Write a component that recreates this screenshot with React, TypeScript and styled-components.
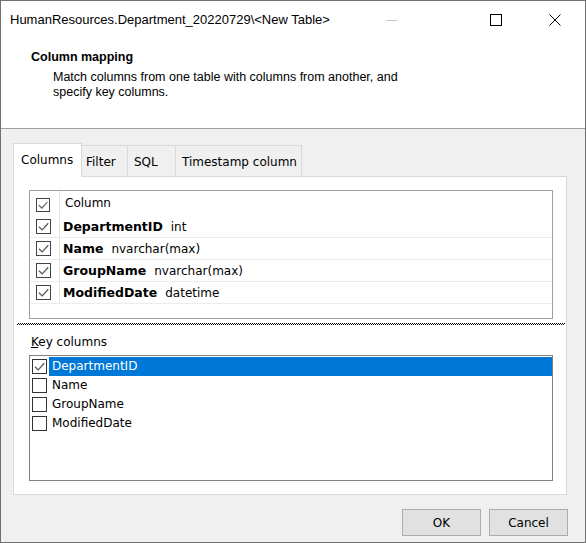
import React from "react";
import styled, { createGlobalStyle } from "styled-components";

const GlobalStyle = createGlobalStyle`
  html, body {
    margin: 0;
    padding: 0;
    background: #ffffff;
  }
  body {
    font-family: "DejaVu Sans", sans-serif;
    font-size: 12px;
    color: #000;
  }
  * {
    box-sizing: border-box;
  }
`;

const Window = styled.div`
  width: 586px;
  height: 543px;
  border: 1px solid #707070;
  background: #ffffff;
  display: flex;
  flex-direction: column;
  overflow: hidden;
`;

const TitleBar = styled.div`
  height: 38px;
  display: flex;
  align-items: center;
  background: #ffffff;
`;

const TitleText = styled.div`
  flex: 1;
  padding-left: 9px;
  font-family: "Liberation Sans", Arial, sans-serif;
  font-size: 13px;
  line-height: 38px;
  white-space: nowrap;
`;

const ControlButton = styled.div<{ $w: number; $mr?: number }>`
  width: ${(p) => p.$w}px;
  margin-right: ${(p) => p.$mr || 0}px;
  height: 38px;
  display: flex;
  align-items: center;
  justify-content: center;
`;

const Header = styled.div`
  height: 90px;
  padding: 10px 0 0 30px;
  border-bottom: 1px solid #a0a0a0;
  background: #ffffff;
  font-family: "Liberation Sans", Arial, sans-serif;
  font-size: 12.5px;
`;

const HeaderTitle = styled.div`
  font-weight: bold;
  line-height: 16px;
`;

const HeaderText = styled.div`
  margin: 5px 0 0 22px;
  line-height: 15px;
  width: 360px;
`;

const Body = styled.div`
  flex: 1;
  background: #f0f0f0;
  padding: 14px 18px 0 12px;
  display: flex;
  flex-direction: column;
`;

const TabStrip = styled.div`
  height: 33px;
  display: flex;
  align-items: flex-end;
`;

const Tab = styled.div<{ $active?: boolean; $w: number; $pl: number }>`
  position: relative;
  z-index: ${(p) => (p.$active ? 1 : 0)};
  width: ${(p) => p.$w}px;
  height: ${(p) => (p.$active ? 34 : 31)}px;
  margin-bottom: ${(p) => (p.$active ? -1 : 0)}px;
  padding: 9px 0 0 ${(p) => p.$pl}px;
  background: ${(p) => (p.$active ? "#ffffff" : "#f0f0f0")};
  border-top: 1px solid #d9d9d9;
  border-right: 1px solid #d9d9d9;
  border-left: ${(p) => (p.$active ? "1px solid #d9d9d9" : "none")};
  line-height: 14px;
  white-space: nowrap;
`;

const Panel = styled.div`
  width: 554px;
  border: 1px solid #d9d9d9;
  background: #ffffff;
  padding: 13px 13px 13px 15px;
`;

const Grid = styled.div`
  height: 129px;
  border: 1px solid #a0a0a0;
  background: #ffffff;
`;

const GridRow = styled.div<{ $header?: boolean }>`
  display: flex;
  height: ${(p) => (p.$header ? 25 : 22)}px;
  border-bottom: ${(p) => (p.$header ? "none" : "1px solid #ececec")};
`;

const CheckCell = styled.div<{ $header?: boolean }>`
  width: 30px;
  border-right: 1px solid #e3e3e3;
  display: flex;
  align-items: ${(p) => (p.$header ? "flex-start" : "center")};
  padding: ${(p) => (p.$header ? "7px 0 0 6px" : "0 0 0 6px")};
`;

const NameCell = styled.div<{ $header?: boolean }>`
  flex: 1;
  display: flex;
  align-items: ${(p) => (p.$header ? "flex-start" : "center")};
  padding: ${(p) => (p.$header ? "5px 0 0 5px" : "0 0 0 3px")};
  white-space: nowrap;
  line-height: 14px;
`;

const ColName = styled.span`
  font-weight: bold;
  font-size: 12.5px;
  margin-right: 8px;
`;

const Box = styled.span<{ $size: number; $dark?: boolean }>`
  width: ${(p) => p.$size}px;
  height: ${(p) => p.$size}px;
  border: 1px solid ${(p) => (p.$dark ? "#333333" : "#444444")};
  background: #ffffff;
  display: inline-flex;
  align-items: center;
  justify-content: center;
  flex-shrink: 0;
`;

const Splitter = styled.div`
  height: 2px;
  margin: 4px -12px 0 -12px;
  background: repeating-conic-gradient(#000000 0 25%, transparent 0 50%) 0 0 / 2px 2px;
`;

const KeyLabel = styled.div`
  margin: 10px 0 0 2px;
  line-height: 14px;
`;

const KeyList = styled.div`
  margin-top: 6px;
  height: 126px;
  border: 1px solid #828282;
  padding-top: 1px;
  background: #ffffff;
`;

const KeyItem = styled.div`
  height: 19px;
  display: flex;
  align-items: center;
  padding-left: 2px;
`;

const KeyText = styled.span<{ $selected?: boolean }>`
  flex: 1;
  height: 19px;
  line-height: 19px;
  margin-left: 2px;
  padding-left: 3px;
  background: ${(p) => (p.$selected ? "#0078d7" : "transparent")};
  color: ${(p) => (p.$selected ? "#ffffff" : "#000000")};
`;

const Footer = styled.div`
  display: flex;
  justify-content: flex-end;
  gap: 8px;
  padding-top: 14px;
  margin-right: -1px;
`;

const Button = styled.button`
  width: 79px;
  height: 27px;
  background: #e1e1e1;
  border: 1px solid #adadad;
  font-family: "DejaVu Sans", sans-serif;
  font-size: 12px;
  color: #000;
  padding: 0;
`;

function Check({ size, color }: { size: number; color: string }) {
  return (
    <svg width={size - 2} height={size - 2} viewBox="0 0 12 12">
      <path d="M1.8 6.2 L4.8 9.2 L10.4 3" fill="none" stroke={color} strokeWidth="1.1" />
    </svg>
  );
}

function CheckBox({ checked, size, dark }: { checked: boolean; size: number; dark?: boolean }) {
  return (
    <Box $size={size} $dark={dark}>
      {checked && <Check size={size} color="#555555" />}
    </Box>
  );
}

const columns = [
  { name: "DepartmentID", type: "int" },
  { name: "Name", type: "nvarchar(max)" },
  { name: "GroupName", type: "nvarchar(max)" },
  { name: "ModifiedDate", type: "datetime" },
];

export default function App() {
  return (
    <>
      <GlobalStyle />
      <Window>
        <TitleBar>
          <TitleText>HumanResources.Department_20220729\&lt;New Table&gt;</TitleText>
          <ControlButton $w={46} $mr={52}>
            <svg width="11" height="1" viewBox="0 0 11 1">
              <rect x="0" y="0" width="11" height="1" fill="#c6c6c6" />
            </svg>
          </ControlButton>
          <ControlButton $w={59}>
            <svg width="12" height="12" viewBox="0 0 12 12">
              <rect x="0.5" y="0.5" width="11" height="11" fill="none" stroke="#000" strokeWidth="1" />
            </svg>
          </ControlButton>
          <ControlButton $w={60}>
            <svg width="12" height="12" viewBox="0 0 12 12">
              <path d="M0.5 0.5 L11.5 11.5 M11.5 0.5 L0.5 11.5" stroke="#000" strokeWidth="1" />
            </svg>
          </ControlButton>
        </TitleBar>

        <Header>
          <HeaderTitle>Column mapping</HeaderTitle>
          <HeaderText>
            Match columns from one table with columns from another, and specify key columns.
          </HeaderText>
        </Header>

        <Body>
          <TabStrip>
            <Tab $active $w={69} $pl={7}>Columns</Tab>
            <Tab $w={46} $pl={4}>Filter</Tab>
            <Tab $w={48} $pl={6}>SQL</Tab>
            <Tab $w={126} $pl={6}>Timestamp column</Tab>
          </TabStrip>

          <Panel>
            <Grid>
              <GridRow $header>
                <CheckCell $header>
                  <CheckBox checked size={14} />
                </CheckCell>
                <NameCell $header>Column</NameCell>
              </GridRow>
              {columns.map((c) => (
                <GridRow key={c.name}>
                  <CheckCell>
                    <CheckBox checked size={15} />
                  </CheckCell>
                  <NameCell>
                    <ColName>{c.name}</ColName>
                    {c.type}
                  </NameCell>
                </GridRow>
              ))}
            </Grid>

            <Splitter />

            <KeyLabel>
              <u>K</u>ey columns
            </KeyLabel>
            <KeyList>
              {columns.map((c, i) => (
                <KeyItem key={c.name}>
                  <CheckBox checked={i === 0} size={15} dark />
                  <KeyText $selected={i === 0}>{c.name}</KeyText>
                </KeyItem>
              ))}
            </KeyList>
          </Panel>

          <Footer>
            <Button>OK</Button>
            <Button>Cancel</Button>
          </Footer>
        </Body>
      </Window>
    </>
  );
}
